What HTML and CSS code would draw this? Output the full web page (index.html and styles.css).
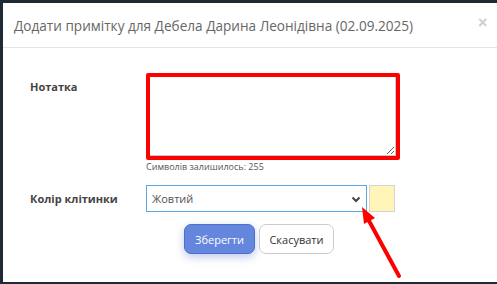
FILE: index.html
```html
<!DOCTYPE html>
<html lang="uk">
<head>
  <meta charset="UTF-8">
  <title>Додати примітку</title>
  <link rel="stylesheet" href="styles.css">
</head>
<body>
  <div id="modal">
    <div id="modal-header">
      <h4>Додати примітку для Дебела Дарина Леонідівна (02.09.2025)</h4>
      <button id="close-btn">×</button>
    </div>

    <div id="modal-body">
      <div class="form-row note-row">
        <label class="field-label">Нотатка</label>
        <div class="field">
          <div class="highlight">
            <textarea id="note-text"></textarea>
          </div>
          <div class="counter">Символів залишилось: 255</div>
        </div>
      </div>

      <div class="form-row color-row">
        <label class="field-label">Колір клітинки</label>
        <div class="field field-inline">
          <div class="select-box">
            <span>Жовтий</span>
            <svg class="chevron" width="10" height="7" viewBox="0 0 10 7">
              <path d="M1.5 1.5 L5 5 L8.5 1.5" fill="none" stroke="#444" stroke-width="2"/>
            </svg>
          </div>
          <div class="swatch"></div>
        </div>
      </div>

      <div class="buttons">
        <button class="btn btn-primary">Зберегти</button>
        <button class="btn btn-default">Скасувати</button>
      </div>
    </div>
  </div>

  <svg id="arrow" width="497" height="284" viewBox="0 0 497 284">
    <line x1="399" y1="276" x2="368" y2="219" stroke="#ff0000" stroke-width="4" stroke-linecap="round"/>
    <polygon points="362,207 375,218 364,224" fill="#ff0000"/>
  </svg>
</body>
</html>
```

FILE: styles.css
```css
body {
    margin: 0;
    padding: 0;
    background-color: #1f2a35;
    font-family: "Open Sans", "Liberation Sans", sans-serif;
    overflow: hidden;
    height: 284px;
}

#modal {
    margin: 3px 0 0 3px;
    width: 600px;
    height: 279px;
    background-color: #ffffff;
}

#modal-header {
    display: flex;
    align-items: center;
    height: 44px;
    padding: 0 11px;
    border-bottom: 1px solid #e5e5e5;
}

#modal-header h4 {
    margin: 0;
    font-size: 13.6px;
    font-weight: normal;
    color: #666666;
    white-space: nowrap;
}

#close-btn {
    position: absolute;
    left: 478px;
    top: 14px;
    background: none;
    border: none;
    padding: 0;
    font-size: 16px;
    color: #cccccc;
    font-family: "Liberation Sans", sans-serif;
    font-weight: bold;
}

#modal-body {
    padding: 25px 0 0 27px;
}

.form-row {
    display: flex;
}

.field-label {
    width: 116px;
    font-size: 11px;
    font-weight: bold;
    color: #444444;
}

.note-row .field-label {
    padding-top: 6px;
}

.highlight {
    width: 246px;
    height: 79px;
    border: 4px solid #ff0000;
    border-radius: 2px;
}

#note-text {
    display: block;
    width: 100%;
    height: 100%;
    box-sizing: border-box;
    border: none;
    border-right: 1px solid #c8c8c8;
    border-bottom: 1px solid #c8c8c8;
    outline: none;
    resize: vertical;
    margin: 0;
}

.counter {
    font-size: 9px;
    color: #555555;
    margin-top: 1px;
    line-height: 12px;
}

.color-row {
    margin-top: 12px;
    align-items: center;
}

.field-inline {
    display: flex;
    gap: 2px;
}

.select-box {
    width: 209px;
    height: 25px;
    border: 1px solid #5aa9e6;
    display: flex;
    align-items: center;
    justify-content: space-between;
    padding: 0 5px 0 5px;
    font-size: 11px;
    color: #555555;
}

.select-box .chevron {
    margin-top: 1px;
}

.swatch {
    width: 24px;
    height: 25px;
    border: 1px solid #d4d4d4;
    background-color: #fff5b8;
}

.buttons {
    display: flex;
    gap: 4px;
    margin: 12px 0 0 154px;
}

.btn {
    height: 30px;
    padding: 0 8px;
    font-family: "Open Sans", "Liberation Sans", sans-serif;
    font-size: 11px;
    border-radius: 7px;
    cursor: pointer;
}

.btn-primary {
    width: 71px;
    background-color: #6486dc;
    border: 1px solid #4d6fcb;
    color: #ffffff;
    box-shadow: 0px 3px 8px rgba(70, 100, 200, 0.35);
}

.btn-default {
    width: 75px;
    background-color: #ffffff;
    border: 1px solid #cccccc;
    color: #333333;
}

#arrow {
    position: absolute;
    left: 0;
    top: 0;
}
```
